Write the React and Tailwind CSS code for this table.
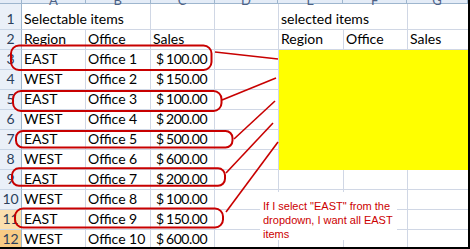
import React from 'react';

const data = [
  ['EAST', 'Office 1', '100.00'],
  ['WEST', 'Office 2', '150.00'],
  ['EAST', 'Office 3', '100.00'],
  ['WEST', 'Office 4', '200.00'],
  ['EAST', 'Office 5', '500.00'],
  ['WEST', 'Office 6', '600.00'],
  ['EAST', 'Office 7', '200.00'],
  ['WEST', 'Office 8', '100.00'],
  ['EAST', 'Office 9', '150.00'],
  ['WEST', 'Office 10', '600.00'],
];

const grid = 'border-r border-b border-[#d0d7e5]';
const yellow = 'border-r border-b border-[#ffff00] bg-[#ffff00]';

function RowNum({ n, tall }) {
  const sel = n === 11 ? 'bg-[#fbdfae]' : n === 12 ? 'bg-[#f8cb84]' : 'bg-[#eaf0f8]';
  return (
    <div className={`w-[22px] shrink-0 flex items-end justify-center pb-[1px] border-r border-r-[#9eb6ce] border-b border-b-[#c9d6e6] text-[#2c3f5c] ${sel} ${tall ? 'h-[26px]' : 'h-[20px]'}`}>
      {n}
    </div>
  );
}

function Cell({ w, cls = grid, children }) {
  return (
    <div className={`${w} shrink-0 h-full flex items-end pb-[1px] pl-[2px] whitespace-nowrap ${cls}`}>
      {children}
    </div>
  );
}

function Money({ v }) {
  return (
    <div className={`w-[64px] shrink-0 h-full flex items-end justify-between pb-[1px] pl-[5px] pr-[7px] ${grid}`}>
      <span>$</span>
      <span className="tracking-[-0.5px]">{v}</span>
    </div>
  );
}

export default function App() {
  return (
    <div className="relative w-[470px] h-[249px] overflow-hidden bg-white border-r-2 border-b-2 border-black font-['Lato','Liberation_Sans',sans-serif] text-[14px] leading-[18px] text-black">
      <div className="-mt-[16px]">
        {/* column letters, mostly scrolled out of view */}
        <div className="flex h-[20px] bg-[#e4ecf7] border-b border-[#9eb6ce] text-[#4d6185] text-[13px]">
          <div className="w-[22px] border-r border-[#9eb6ce]"></div>
          {[['A', 'w-[64px]'], ['B', 'w-[65px]'], ['C', 'w-[64px]'], ['D', 'w-[64px]'], ['E', 'w-[65px]'], ['F', 'w-[64px]'], ['G', 'w-[61px]']].map(([l, w]) => (
            <div key={l} className={`${w} flex justify-center pt-[7px] border-r border-[#9eb6ce]`}>{l}</div>
          ))}
        </div>

        {/* row 1 */}
        <div className="flex h-[26px]">
          <RowNum n={1} tall />
          <Cell w="w-[129px]">Selectable items</Cell>
          <Cell w="w-[64px]" />
          <Cell w="w-[64px]" />
          <Cell w="w-[129px]">selected items</Cell>
          <Cell w="w-[61px]" />
        </div>

        {/* row 2 */}
        <div className="flex h-[20px]">
          <RowNum n={2} />
          <Cell w="w-[64px]">Region</Cell>
          <Cell w="w-[65px]">Office</Cell>
          <Cell w="w-[64px]">Sales</Cell>
          <Cell w="w-[64px]" />
          <Cell w="w-[65px]">Region</Cell>
          <Cell w="w-[64px]">Office</Cell>
          <Cell w="w-[61px]">Sales</Cell>
        </div>

        {data.map((r, i) => {
          const n = i + 3;
          const fill = n <= 8 ? yellow : grid;
          return (
            <div key={n} className="flex h-[20px]">
              <RowNum n={n} />
              <Cell w="w-[64px]">{r[0]}</Cell>
              <Cell w="w-[65px]">{r[1]}</Cell>
              <Money v={r[2]} />
              <Cell w="w-[64px]" />
              <Cell w="w-[65px]" cls={fill} />
              <Cell w="w-[64px]" cls={fill} />
              <Cell w="w-[61px]" cls={fill} />
            </div>
          );
        })}
      </div>

      {/* annotation */}
      <svg className="absolute inset-0" width="470" height="249" fill="none" stroke="#c80000">
        <rect x="11" y="45.5" width="200.5" height="24.5" rx="8" strokeWidth="2" />
        <rect x="13" y="91" width="208.5" height="20" rx="8" strokeWidth="2" />
        <rect x="16" y="131" width="216.5" height="16.5" rx="7" strokeWidth="2" />
        <rect x="12" y="168.3" width="213" height="17.5" rx="7" strokeWidth="2" />
        <rect x="15" y="208.5" width="208" height="19" rx="8" strokeWidth="2" />
        <line x1="215" y1="52" x2="278" y2="59" strokeWidth="1.6" />
        <line x1="222" y1="100" x2="276" y2="78" strokeWidth="1.6" />
        <line x1="234" y1="139" x2="275" y2="101" strokeWidth="1.6" />
        <line x1="226" y1="173" x2="273" y2="123" strokeWidth="1.6" />
        <line x1="226" y1="212" x2="278" y2="142" strokeWidth="1.6" />
      </svg>

      <div className="absolute left-[260px] top-[192px] w-[137px] h-[48px] bg-white pl-[3px] pt-[7px] font-['Liberation_Sans',Arial,sans-serif] text-[11px] leading-[14px] text-[#cc0000]">
        If I select "EAST" from the dropdown, I want all EAST items
      </div>
    </div>
  );
}
